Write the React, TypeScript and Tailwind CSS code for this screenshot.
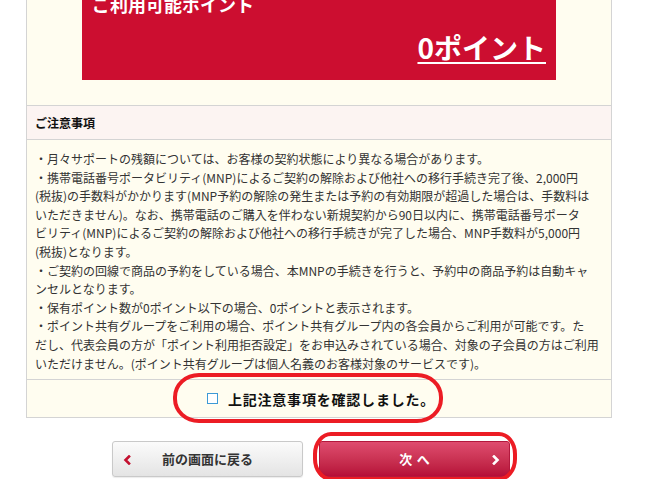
const notes = [
  '・月々サポートの残額については、お客様の契約状態により異なる場合があります。',
  '・携帯電話番号ポータビリティ(MNP)によるご契約の解除および他社への移行手続き完了後、2,000円',
  '(税抜)の手数料がかかります(MNP予約の解除の発生または予約の有効期限が超過した場合は、手数料は',
  'いただきません)。なお、携帯電話のご購入を伴わない新規契約から90日以内に、携帯電話番号ポータ',
  'ビリティ(MNP)によるご契約の解除および他社への移行手続きが完了した場合、MNP手数料が5,000円',
  '(税抜)となります。',
  '・ご契約の回線で商品の予約をしている場合、本MNPの手続きを行うと、予約中の商品予約は自動キャ',
  'ンセルとなります。',
  '・保有ポイント数が0ポイント以下の場合、0ポイントと表示されます。',
  '・ポイント共有グループをご利用の場合、ポイント共有グループ内の各会員からご利用が可能です。た',
  'だし、代表会員の方が「ポイント利用拒否設定」をお申込みされている場合、対象の子会員の方はご利用',
  'いただけません。(ポイント共有グループは個人名義のお客様対象のサービスです)。',
]

function Chevron({ dir, className }: { dir: 'left' | 'right'; className?: string }) {
  return (
    <svg width="8" height="10" viewBox="0 0 8 10" className={className}>
      <polyline
        points={dir === 'left' ? '6,1.5 2.5,5 6,8.5' : '2,1.5 5.5,5 2,8.5'}
        fill="none"
        stroke="currentColor"
        strokeWidth="2.6"
        strokeLinecap="square"
      />
    </svg>
  )
}

export default function App() {
  return (
    <div className="relative w-[649px] h-[479px] overflow-hidden bg-white font-['Meiryo','Noto_Sans_CJK_JP',sans-serif] text-[#333]">
      {/* Panel */}
      <div className="-mt-[40px] ml-[26px] w-[586px] border-x border-b border-[#d4d4d4] bg-[#fffdf0]">
        {/* Points box */}
        <div className="ml-[55px] w-[474px] bg-[#cc0e30] pt-[35px] px-[10px] pb-[19px] text-white font-bold">
          <div className="text-[18px] leading-[18px]">ご利用可能ポイント</div>
          <div className="mt-[20px] text-right text-[28px] leading-[28px]">
            <span className="underline underline-offset-[3px] decoration-2">0ポイント</span>
          </div>
        </div>

        {/* Notes header */}
        <div className="mt-[25px] h-[35px] border-y border-[#d4d4d4] bg-[#fcf4f2] px-[8px] flex items-center text-[12px] font-bold text-[#111]">
          ご注意事項
        </div>

        {/* Notes body */}
        <div className="px-[8px] pt-[10px] pb-[6px] text-[12px] leading-[18.6px]">
          {notes.map((line, i) => (
            <div key={i} className="whitespace-nowrap">
              {line}
            </div>
          ))}
        </div>

        {/* Confirm */}
        <div className="h-[38px] border-t border-[#d4d4d4] flex items-center justify-center pl-[4px]">
          <span className="shrink-0 w-[11px] h-[11px] border border-[#3d9ad6] bg-white mr-[10px]" />
          <span className="text-[14px] font-bold text-[#111] leading-none tracking-[0.8px]">上記注意事項を確認しました。</span>
        </div>
      </div>

      {/* Buttons */}
      <div className="mt-[23px] ml-[112px] flex gap-[16px]">
        <button className="relative w-[191px] h-[36px] rounded-[3px] border border-[#c9c9c9] bg-gradient-to-b from-[#fbfbfb] to-[#e4e4e4] shadow-[0_1px_1px_rgba(0,0,0,0.08)] flex items-center justify-center text-[13px] font-bold text-[#333]">
          <Chevron dir="left" className="absolute left-[10px] top-[13px] text-[#c4102f]" />
          前の画面に戻る
        </button>
        <button className="relative w-[191px] h-[36px] rounded-[3px] border border-[#b3183d] bg-gradient-to-b from-[#df4c6f] to-[#b60d38] flex items-center justify-center text-[13px] font-bold text-white tracking-[0.35em]">
          <span className="pl-[0.35em]">次へ</span>
          <Chevron dir="right" className="absolute right-[9px] top-[13px] text-white" />
        </button>
      </div>

      {/* Red annotation marks */}
      <div className="absolute left-[173px] top-[373px] w-[270px] h-[50px] border-[4px] border-[#ec1c24] rounded-[26px/24px]" />
      <div className="absolute left-[313px] top-[432px] w-[204px] h-[49px] border-[4px] border-[#ec1c24] rounded-[18px/22px]" />
    </div>
  )
}
